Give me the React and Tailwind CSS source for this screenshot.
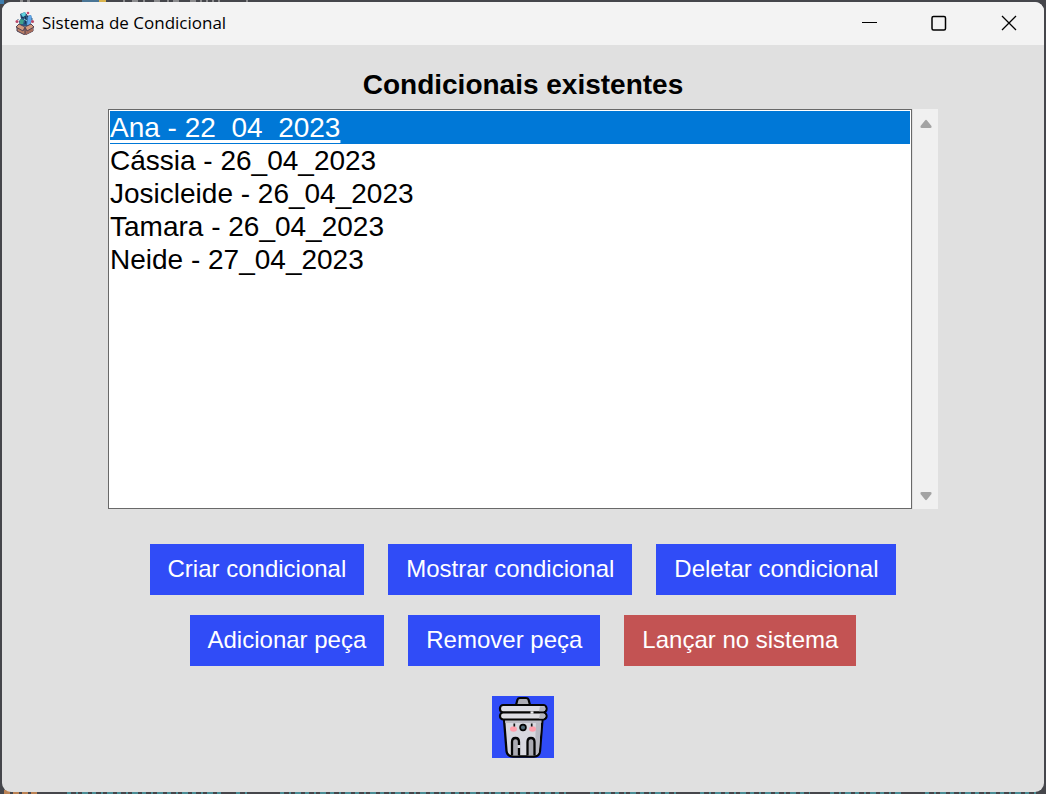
import { useState } from "react";

const records = [
  "Ana - 22_04_2023",
  "Cássia - 26_04_2023",
  "Josicleide - 26_04_2023",
  "Tamara - 26_04_2023",
  "Neide - 27_04_2023",
];

function BoxIcon() {
  return (
    <svg viewBox="0 0 24 24" className="size-6 shrink-0" aria-hidden="true">
      <path d="M7 3l5-2 2 4 4-1 1 4-2 7H7l-1-5 2-2z" fill="#285b86" />
      <path d="M8 3l4-2 1 3-3 2z" fill="#62d3df" />
      <path d="M15 5l3-1 1 4-2 6h-3z" fill="#62a8eb" />
      <path d="M7 8l4 1-1 4H7z" fill="#3ea18c" />
      <path d="M12 5l1 4-1 4M8 6l3 1M13 3l2 3" stroke="#1b3154" />
      <path d="M11 8l3 2" stroke="#8ad9ed" />
      <path d="M4 15l8 3 8-3v5l-8 4-8-4z" fill="#bd8168" stroke="#473d50" />
      <path d="M12 18v6l8-4v-5z" fill="#a86e5d" />
      <path d="M3 16l3-3 6 3-2 4zM21 16l-3-3-6 3 2 4z" fill="#d49b7d" stroke="#544354" />
      <path d="M12 17v6" stroke="#473d50" />
      <circle cx="15" cy="2" r="1.3" fill="#c84b74" />
      <circle cx="4" cy="10.500" r="1.500" fill="#b94768" />
      <circle cx="19.500" cy="10.500" r="1.500" fill="#b94768" />
      <path d="M5 8v1M19 7v2M6 12h1" stroke="#3c6385" />
    </svg>
  );
}

function TrashIcon() {
  return (
    <svg viewBox="0 0 62 62" className="size-full" aria-hidden="true">
      <path d="M12 23L14.500 55Q15 60.500 21 60.500H42Q47.500 60.500 48 55L50.500 23Z" fill="#d8d8df" stroke="#050505" strokeWidth="2.300" />
      <path d="M44 24h5.300l-2.300 31q-1 4-4 4h-3q3-2 3-6z" fill="#b9b9c2" />
      <path d="M13 24h36.300v3H13.300z" fill="#bcbcc5" />
      <path d="M24 9l1.500-5.500Q26 2 28 2h6q2 0 2.500 1.500L38 9z" fill="#adadb5" stroke="#050505" strokeWidth="2.200" />
      <rect x="8" y="9" width="46.500" height="7.500" rx="3.200" fill="#dddde3" stroke="#050505" strokeWidth="2.200" />
      <rect x="8" y="16.500" width="46.500" height="7" rx="3.200" fill="#dddde3" stroke="#050505" strokeWidth="2.200" />
      <path d="M48 10.200h3.500q2 0 2 2.500t-2 2.600H47zM48 17.700h3.500q2 0 2 2.300t-2 2.400H47z" fill="#b5b5bd" />
      <path d="M38.500 16.500h3" stroke="#eeeef2" strokeWidth="2.300" />
      <path d="M20 59.500V46q0-4 3.500-4t3.500 4v13.500M35.500 59.500V46q0-4 3.500-4t3.500 4v13.500" fill="#aaaab2" stroke="#050505" strokeWidth="2.300" />
      <path d="M27 49v3" stroke="#d8d8df" strokeWidth="3" />
      <ellipse cx="21.500" cy="33" rx="3.500" ry="2.700" fill="#ffa0ad" />
      <ellipse cx="40.500" cy="33" rx="3.500" ry="2.700" fill="#ffa0ad" />
      <path d="M22.300 27.500v3M39.700 27.500v3" stroke="#111" strokeWidth="1.700" />
      <ellipse cx="31" cy="31.500" rx="2.900" ry="2.800" fill="#536b78" stroke="#050505" strokeWidth="1.700" />
    </svg>
  );
}

function TitleBar() {
  return (
    <header className="flex h-[43px] items-center justify-between bg-[#f3f3f3] pl-[11px] text-black">
      <div className="flex items-center gap-[5px] pb-0.5">
        <BoxIcon />
        <span className="font-['Open_Sans',sans-serif] text-[17px] leading-6">Sistema de Condicional</span>
      </div>
      <div className="flex h-full pb-0.5">
        <button type="button" aria-label="Minimizar" className="flex w-[70px] items-center justify-center">
          <svg viewBox="0 0 16 16" className="size-4" fill="none" stroke="currentColor" aria-hidden="true"><path d="M1 7.500h15" /></svg>
        </button>
        <button type="button" aria-label="Maximizar" className="flex w-[70px] items-center justify-center">
          <svg viewBox="0 0 16 16" className="size-4" fill="none" stroke="currentColor" strokeWidth="1.500" aria-hidden="true"><rect x="1" y="1.500" width="13.500" height="13.500" rx="1.500" /></svg>
        </button>
        <button type="button" aria-label="Fechar" className="flex w-[70px] items-center justify-center">
          <svg viewBox="0 0 16 16" className="size-4" fill="none" stroke="currentColor" strokeWidth="1.300" aria-hidden="true"><path d="M1 1l14 14M15 1L1 15" /></svg>
        </button>
      </div>
    </header>
  );
}

function ActionButton({ children, danger = false }) {
  return (
    <button type="button" className={`h-[51px] px-[18px] pb-0.5 text-2xl text-white ${danger ? "bg-[#c35353]" : "bg-[#304cf7]"}`}>
      {children}
    </button>
  );
}

function DesktopTop() {
  return (
    <svg className="absolute top-0 left-0 h-1 w-80" viewBox="0 0 320 4" fill="none" strokeWidth="4" aria-hidden="true">
      <path d="M0 2h4" stroke="#3f7eae" />
      <path d="M82 2h17" stroke="#4a7595" />
      <path d="M99 2h7" stroke="#d9b34c" />
      <path d="M20 2h3M27 2h3M123 2h2M132 2h6M143 2h2M154 2h6M167 2h2M173 2h6M190 2h6M200 2h2M206 2h2M212 2h2M218 2h2M246 2h2" stroke="#8b8b8d" />
    </svg>
  );
}

function DesktopBottom() {
  return (
    <svg className="absolute bottom-0 left-0 h-1 w-full" preserveAspectRatio="none" viewBox="0 0 1046 4" fill="none" strokeWidth="4" aria-hidden="true">
      <path d="M4 2h36" stroke="#bb8254" strokeDasharray="6 3" />
      <path d="M67 2h155M236 2h15M280 2h290M590 2h90M700 2h110M830 2h75M925 2h115" stroke="#4b8d96" strokeDasharray="4 5 2 4 6 4" />
    </svg>
  );
}

export default function App() {
  const [selected, setSelected] = useState(0);
  return (
    <div className="relative flex min-h-screen bg-[#45464b] p-0.5 font-['Liberation_Sans',Arial,sans-serif]">
      <DesktopTop />
      <DesktopBottom />
      <div className="relative flex grow flex-col overflow-hidden rounded-[9px] bg-[#e0e0e0]">
        <TitleBar />
        <main className="flex flex-col items-center px-[106px] pt-6">
          <h1 id="list-title" className="text-[28px] leading-8 font-bold text-black">Condicionais existentes</h1>
          <div className="mt-2 flex h-[400px] w-full gap-px">
            <ul role="listbox" aria-labelledby="list-title" className="grow border border-[#696969] bg-white p-px text-[28px] leading-[33px] text-black">
              {records.map((name, i) => (
                <li
                  key={name}
                  role="option"
                  tabIndex={0}
                  aria-selected={selected === i}
                  onClick={() => setSelected(i)}
                  className={selected === i ? "bg-[#0078d7] text-white underline decoration-[3px] underline-offset-[3px] [text-decoration-skip-ink:none]" : ""}
                >
                  {name}
                </li>
              ))}
            </ul>
            <div className="flex w-[25px] flex-col items-center justify-between bg-[#f0f0f0] pt-[9px] pb-[7px]">
              <button type="button" aria-label="Rolar para cima">
                <svg viewBox="0 0 12 12" className="size-3" aria-hidden="true"><path d="M5 2.500Q6 1 7 2.500l4.500 5.500q.5 2-1 2h-9q-1.500 0-1-2z" fill="#a3a3a3" /></svg>
              </button>
              <button type="button" aria-label="Rolar para baixo">
                <svg viewBox="0 0 12 12" className="size-3" aria-hidden="true"><path d="M5 9.500Q6 11 7 9.500L11.500 4q.5-2-1-2h-9Q0 2 .5 4z" fill="#a3a3a3" /></svg>
              </button>
            </div>
          </div>
          <div className="mt-[35px] flex flex-wrap justify-center gap-6">
            <ActionButton>Criar condicional</ActionButton>
            <ActionButton>Mostrar condicional</ActionButton>
            <ActionButton>Deletar condicional</ActionButton>
          </div>
          <div className="mt-5 flex flex-wrap justify-center gap-6">
            <ActionButton>Adicionar peça</ActionButton>
            <ActionButton>Remover peça</ActionButton>
            <ActionButton danger>Lançar no sistema</ActionButton>
          </div>
          <button type="button" aria-label="Lixeira" className="mt-[30px] size-[62px] bg-[#304cf7]">
            <TrashIcon />
          </button>
        </main>
      </div>
    </div>
  );
}
